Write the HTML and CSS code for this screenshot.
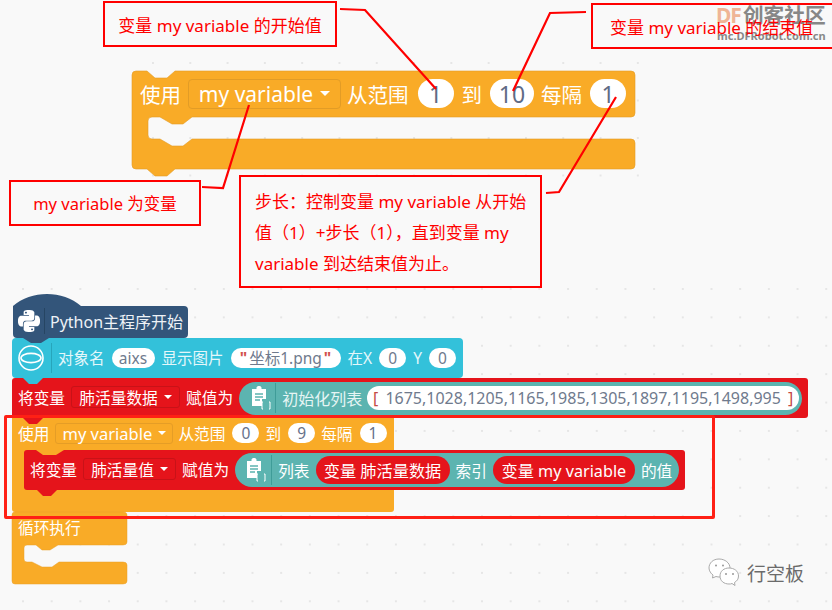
FILE: index.html
```html
<!DOCTYPE html>
<html lang="zh">
<head>
<meta charset="utf-8">
<title>my variable</title>
<link rel="stylesheet" href="styles.css">
</head>
<body>
<main class="canvas">
  <div class="dots dots-top"></div>
  <div class="dots dots-low"></div>

  <div class="logo">
    <div class="logo-main"><span class="logo-df">DF</span>创客社区</div>
    <div class="logo-sub">mc.DFRobot.com.cn</div>
  </div>

  <!-- large example block -->
  <section class="big-block">
    <svg class="shape" width="503" height="105" viewBox="0 0 503 105"><path d="M0 4Q0 0 4 0H15L23 7H35L43 0H499Q503 0 503 4V42Q503 46 499 46H60L51 53H40L28 46H20Q16 46 16 50V64Q16 68 20 68H28L40 75H51L60 68H499Q503 68 503 72V94Q503 98 499 98H43L35 105H23L15 98H4Q0 98 0 94Z" fill="#f9ab27" stroke="#e29c26" stroke-width=".6"/></svg>
    <div class="big-row">
      <span>使用</span>
      <span class="big-drop">my variable<i class="caret big-caret"></i></span>
      <span>从范围</span>
      <span class="big-pill big-pill-a">1</span>
      <span>到</span>
      <span class="big-pill big-pill-b">10</span>
      <span>每隔</span>
      <span class="big-pill big-pill-a big-pill-last">1</span>
    </div>
  </section>

  <!-- program -->
  <section class="hat">
    <svg class="shape" width="175" height="50" viewBox="0 0 175 50"><path d="M0 12C18 -4 50 -4 68 12H171Q175 12 175 16V40Q175 44 171 44H36L28 49H18L10 44H4Q0 44 0 40Z" fill="#33557a"/></svg>
    <div class="row hat-row">
      <svg class="py-icon" width="22" height="22" viewBox="0 0 24 24"><path fill="#fff" d="M14.25.18l.9.2.73.26.59.3.45.32.34.34.25.34.16.33.1.3.04.26.02.2-.01.13V8.5l-.05.63-.13.55-.21.46-.26.38-.3.31-.33.25-.35.19-.35.14-.33.1-.3.07-.26.04-.21.02H8.77l-.69.05-.59.14-.5.22-.41.27-.33.32-.27.35-.2.36-.15.37-.1.35-.07.32-.04.27-.02.21v3.06H3.17l-.21-.03-.28-.07-.32-.12-.35-.18-.36-.26-.36-.36-.35-.46-.32-.59-.28-.73-.21-.88-.14-1.05-.05-1.23.06-1.22.16-1.04.24-.87.32-.71.36-.57.4-.44.42-.33.42-.24.4-.16.36-.1.32-.05.24-.01h.16l.06.01h8.16v-.83H6.18l-.01-2.75-.02-.37.05-.34.11-.31.17-.28.25-.26.31-.23.38-.2.44-.18.51-.15.58-.12.64-.1.71-.06.77-.04.84-.02 1.27.05zm-6.3 1.98l-.23.33-.08.41.08.41.23.34.33.22.41.09.41-.09.33-.22.23-.34.08-.41-.08-.41-.23-.33-.33-.22-.41-.09-.41.09zm13.09 3.95l.28.06.32.12.35.18.36.27.36.35.35.47.32.59.28.73.21.88.14 1.04.05 1.23-.06 1.23-.16 1.04-.24.86-.32.71-.36.57-.4.45-.42.33-.42.24-.4.16-.36.09-.32.05-.24.02-.16-.01h-8.22v.82h5.84l.01 2.76.02.36-.05.34-.11.31-.17.29-.25.25-.31.24-.38.2-.44.17-.51.15-.58.13-.64.09-.71.07-.77.04-.84.01-1.27-.04-1.07-.14-.9-.2-.73-.25-.59-.3-.45-.33-.34-.34-.25-.34-.16-.33-.1-.3-.04-.25-.02-.2.01-.13v-5.34l.05-.64.13-.54.21-.46.26-.38.3-.32.33-.24.35-.2.35-.14.33-.1.3-.06.26-.04.21-.02.13-.01h5.84l.69-.05.59-.14.5-.21.41-.28.33-.32.27-.35.2-.36.15-.36.1-.35.07-.32.04-.28.02-.21V6.07h2.09l.14.01zm-6.47 14.25l-.23.33-.08.41.08.41.23.33.33.23.41.08.41-.08.33-.23.23-.33.08-.41-.08-.41-.23-.33-.33-.23-.41-.08-.41.08z"/></svg>
      <i class="divider div-dark"></i>
      <span>Python主程序开始</span>
    </div>
  </section>

  <section class="cyan">
    <i class="tab tab-cyan"></i>
    <div class="row">
      <svg class="cy-icon" width="28" height="28" viewBox="0 0 28 28"><circle cx="14" cy="14" r="12" fill="none" stroke="#fff" stroke-width="1.6"/><ellipse cx="14" cy="14" rx="10" ry="4.6" fill="none" stroke="#fff" stroke-width="1.6"/></svg>
      <i class="divider div-cyan"></i>
      <span class="soft">对象名</span>
      <span class="pill pill-aixs">aixs</span>
      <span class="soft">显示图片</span>
      <span class="pill pill-file"><b class="q">"</b>坐标1.png<b class="q">"</b></span>
      <span class="soft">在X</span>
      <span class="pill pill-num">0</span>
      <span class="soft">Y</span>
      <span class="pill pill-num">0</span>
    </div>
  </section>

  <section class="red-main">
    <i class="tab tab-red"></i>
    <div class="row red-row">
      <span>将变量</span>
      <span class="drop drop-a">肺活量数据<i class="caret"></i></span>
      <span>赋值为</span>
      <div class="teal teal-a">
        <svg class="clip" width="22" height="26" viewBox="0 0 22 26"><use href="#clipboard"/></svg>
        <i class="divider div-teal"></i>
        <span class="soft-teal">初始化列表</span>
        <span class="list-input"><b class="br">[</b>1675,1028,1205,1165,1985,1305,1897,1195,1498,995<b class="br">]</b></span>
      </div>
    </div>
  </section>

  <section class="loop-use">
    <div class="row use-row">
      <span>使用</span>
      <span class="drop drop-o">my variable<i class="caret"></i></span>
      <span>从范围</span>
      <span class="pill pill-s">0</span>
      <span>到</span>
      <span class="pill pill-s">9</span>
      <span>每隔</span>
      <span class="pill pill-s">1</span>
    </div>
    <i class="tab tab-orange"></i>
  </section>

  <section class="red-nested">
    <svg class="notch-top" width="60" height="7" viewBox="0 0 60 7"><path d="M12 0L19 5H32L40 0Z" fill="#f9ab27"/></svg>
    <i class="tab tab-red tab-nested"></i>
    <div class="row red-row red-row-n">
      <span>将变量</span>
      <span class="drop drop-b">肺活量值<i class="caret"></i></span>
      <span>赋值为</span>
      <div class="teal teal-b">
        <svg class="clip clip-b" width="22" height="26" viewBox="0 0 22 26"><use href="#clipboard"/></svg>
        <i class="divider div-teal div-b"></i>
        <span>列表</span>
        <span class="var-pill var-a">变量 肺活量数据</span>
        <span>索引</span>
        <span class="var-pill var-b">变量 my variable</span>
        <span>的值</span>
      </div>
    </div>
  </section>

  <section class="forever">
    <svg class="shape" width="115" height="72" viewBox="0 0 115 72"><path d="M0 3Q0 0 3 0H111Q115 0 115 3V30Q115 33 111 33H46L38 38H30L24 33H15Q12 33 12 36V47Q12 50 15 50H20L30 55H40L47 50H111Q115 50 115 53V69Q115 72 111 72H3Q0 72 0 69Z" fill="#f9ab27" stroke="#e8a12b" stroke-width=".5"/></svg>
    <div class="row forever-row"><span>循环执行</span></div>
  </section>

  <!-- annotations -->
  <div class="note note-start">变量 my variable 的开始值</div>
  <div class="note note-end">变量 my variable 的结束值</div>
  <div class="note note-var">my variable 为变量</div>
  <div class="note note-step">步长：控制变量 my variable 从开始值（1）+步长（1），直到变量 my variable 到达结束值为止。</div>
  <div class="frame"></div>

  <svg class="lines" width="832" height="610" viewBox="0 0 832 610">
    <g fill="none" stroke="#f00" stroke-width="2.2">
      <path d="M340 9L365 10L436 89"/>
      <path d="M586 12L550 13L513 91"/>
      <path d="M202 187L223 188L249 105"/>
      <path d="M546 193L559 192L616 97"/>
    </g>
  </svg>

  <div class="wechat">
    <svg width="32" height="30" viewBox="0 0 32 30"><g fill="#fff" stroke="#aaa" stroke-width="1"><path d="M11 1C5 1 1 5 1 10C1 13 3 15.500 5 17L4.500 20L8 18.500C9 19 11 19 12 19C18 19 22 15 22 10C22 5 17 1 11 1Z"/><path d="M21 10C16 10 12 13 12 18C12 23 16 26 21 26C22 26 23 26 24 25.500L27 27.500L26.500 24.500C29 23 30.500 21 30.500 18C30.500 13 26 10 21 10Z"/></g><g fill="#999"><circle cx="8" cy="7.500" r="1"/><circle cx="15" cy="7.500" r="1"/><circle cx="18" cy="16" r="1"/><circle cx="25" cy="16" r="1"/></g></svg>
    <span>行空板</span>
  </div>

  <svg class="defs" width="0" height="0"><defs><g id="clipboard"><path fill="#fff" d="M2 4H6.500V2.500A2 2 0 0 1 8.500 1H9.500A2 2 0 0 1 11.500 2.500V4H16V14L12 14V21H2Z"/><path stroke="#5cb4b0" stroke-width="1.400" d="M5 9H13M5 12H13M5 15H10"/><path fill="none" stroke="#fff" stroke-width="1" d="M13 17H12V24H13M19 17H20V24H19"/></g></defs></svg>
</main>
</body>
</html>
```

FILE: styles.css
```css
* { box-sizing: border-box; }
html, body { margin: 0; padding: 0; }
body { background: #f9f9f9; font-family: "Noto Sans", "Noto Sans CJK SC", sans-serif; }
.canvas { position: relative; width: 832px; height: 610px; overflow: hidden; }
i, b { font-style: normal; font-weight: normal; display: block; }

.dots { position: absolute; background-image: radial-gradient(circle at 1px 1px, #e6e6e6 1px, transparent 1.2px); }
.dots-top { left: 152px; top: 62px; width: 488px; height: 116px; background-size: 37.3px 37.5px; }
.dots-low { left: 0; top: 288px; width: 832px; height: 322px; background-size: 28.7px 28.4px; background-position: 22px 0; }

.logo { position: absolute; left: 716px; top: 2px; width: 114px; color: #7b7b7b; z-index: 5; }
.logo-main { display: flex; align-items: center; gap: 2px; font-size: 20.700px; line-height: 26px; font-weight: 700; white-space: nowrap; opacity: .9; }
.logo-df { flex: none; color: #efae8c; font-size: 21px; letter-spacing: -1px; }
.logo-sub { font-size: 11px; line-height: 13px; font-weight: 700; white-space: nowrap; color: #888; margin-top: 1px; padding-left: 1px; }

.shape { position: absolute; left: 0; top: 0; overflow: visible; }
.row { position: relative; display: flex; align-items: center; color: #fff; font-size: 15.700px; white-space: nowrap; }

.big-block { position: absolute; left: 132px; top: 71px; width: 503px; height: 105px; }
.big-row { position: relative; display: flex; align-items: center; gap: 8px; height: 45px; padding-left: 8px; color: #fff; font-size: 20.500px; white-space: nowrap; }
.big-drop { display: flex; align-items: center; justify-content: center; gap: 7px; width: 153px; height: 30px; margin: 0 -2px 0 -1px; background: #f9ab27; border: 1px solid #e29c26; border-radius: 4px; font-size: 21px; }
.caret { display: inline-block; width: 0; height: 0; border: 4px solid transparent; border-top: 4.500px solid #fff; border-bottom: 0; }
.big-caret { border-width: 5px 5px 0; border-top-color: #fff; }
.big-pill { display: flex; align-items: center; justify-content: center; height: 29px; background: #fff; border-radius: 15px; color: #5f6b85; font-size: 23px; }
.big-pill-a { width: 36px; margin-left: 1px; }
.big-pill-b { width: 44px; margin-right: -1px; }
.big-pill-last { margin-left: 0; }

.hat { position: absolute; left: 13px; top: 294px; width: 175px; height: 50px; z-index: 3; }
.hat-row { height: 32px; top: 11px; padding-left: 5px; font-size: 16px; color: #eef2f6; }
.py-icon { flex: none; }
.divider { flex: none; width: 1px; }
.div-dark { height: 26px; margin: 0 5px 0 4px; background: #264563; }

.cyan { position: absolute; left: 12px; top: 338px; width: 451px; height: 40px; background: #33c1da; border-radius: 4px; z-index: 2; }
.cyan .row { height: 39px; padding-left: 5px; gap: 6px; }
.cy-icon { flex: none; }
.div-cyan { height: 30px; background: #27a5bb; }
.soft { color: #e4f7fa; font-size: 15.500px; }
.pill { display: flex; align-items: center; justify-content: center; height: 20px; background: #fff; border-radius: 10px; color: #6f7a8d; font-size: 15.500px; }
.pill-aixs { width: 43px; margin: 0 1px; }
.pill-file { width: 110px; gap: 2px; margin: 0 1px; }
.pill-num { width: 27px; margin: 0 1px; }
.q { color: #d2524c; font-weight: 700; line-height: 14px; align-self: flex-start; margin-top: 3px; }

.tab { position: absolute; top: 100%; width: 20px; height: 6px; clip-path: polygon(0 0, 100% 0, 70% 100%, 30% 100%); }
.tab-cyan { left: 11px; background: #33c1da; }
.tab-red { left: 11px; background: #e5141b; }
.tab-orange { left: 11px; background: #f9ab27; }

.red-main { position: absolute; left: 12px; top: 378px; width: 796px; height: 40px; background: #e5141b; border-radius: 3px; z-index: 1; }
.red-row { height: 38px; padding-left: 6px; gap: 6px; }
.drop { display: flex; align-items: center; justify-content: center; gap: 6px; height: 22px; border-radius: 3px; }
.drop-a { width: 109px; background: #e5141b; border: 1px solid #c81218; }
.drop-b { width: 93px; background: #e5141b; border: 1px solid #c81218; }
.drop-o { width: 118px; height: 21px; background: #f9ab27; border: 1px solid #e59d26; font-size: 16.500px; }
.teal { position: relative; top: 1px; display: flex; align-items: center; background: #5cb4b0; border-radius: 17px; color: #fff; }
.teal-a { width: 563px; height: 33px; padding-left: 11px; }
.clip { flex: none; }
.div-teal { height: 30px; background: #3f9c98; }
.teal-a .div-teal { margin: 0 6px 0 3px; }
.soft-teal { color: #e6f5f4; font-size: 16px; }
.list-input { display: flex; align-items: center; justify-content: center; gap: 7px; width: 432px; height: 24px; margin-left: 5px; background: #fff; border-radius: 12px; color: #6f7a8d; font-size: 16px; }
.br { color: #c44a45; }

.loop-use { position: absolute; left: 12px; top: 418px; width: 382px; height: 94px; background: #f9ab27; border-radius: 0 0 3px 3px; }
.use-row { height: 30px; padding-left: 6px; gap: 6px; }
.use-row .drop-o { margin-right: -1px; }
.pill-s { width: 27px; height: 20px; margin-left: 1px; color: #66718a; }

.red-nested { position: absolute; left: 24px; top: 450px; width: 661px; height: 40px; background: #e5141b; border-radius: 3px; z-index: 1; }
.notch-top { position: absolute; left: 0; top: 0; }
.tab-nested { left: 13px; }
.teal-b { width: 444px; height: 34px; padding-left: 10px; gap: 6px; }
.clip-b { margin-right: -2px; }
.var-pill { display: flex; align-items: center; justify-content: center; height: 28px; background: #e5141b; border-radius: 14px; color: #fff; font-size: 16.200px; }
.var-a { width: 134px; }
.var-b { width: 142px; }

.forever { position: absolute; left: 12px; top: 512px; width: 115px; height: 72px; }
.forever-row { height: 31px; padding: 0 0 0 6px; }

.note { position: absolute; border: 2px solid #f00; color: #f00; font-size: 17px; }
.note-start, .note-end, .note-var { display: flex; align-items: center; justify-content: center; white-space: nowrap; }
.note-start { left: 103px; top: 1px; width: 234px; height: 46px; }
.note-end { left: 591px; top: 3px; width: 248px; height: 46px; justify-content: flex-start; padding-left: 17px; z-index: 6; }
.note-var { left: 9px; top: 180px; width: 192px; height: 46px; font-size: 16.500px; }
.note-step { left: 239px; top: 175px; width: 303px; height: 113px; padding: 9px 8px 0 14px; line-height: 31px; }
.frame { position: absolute; left: 4px; top: 415px; width: 711px; height: 104px; border: 3px solid #ff2015; border-radius: 2px; z-index: 4; }
.lines { position: absolute; left: 0; top: 0; z-index: 7; pointer-events: none; }
.defs { position: absolute; }

.wechat { position: absolute; left: 708px; top: 558px; display: flex; align-items: center; gap: 7px; color: #6b6b6b; font-size: 19px; }
```
